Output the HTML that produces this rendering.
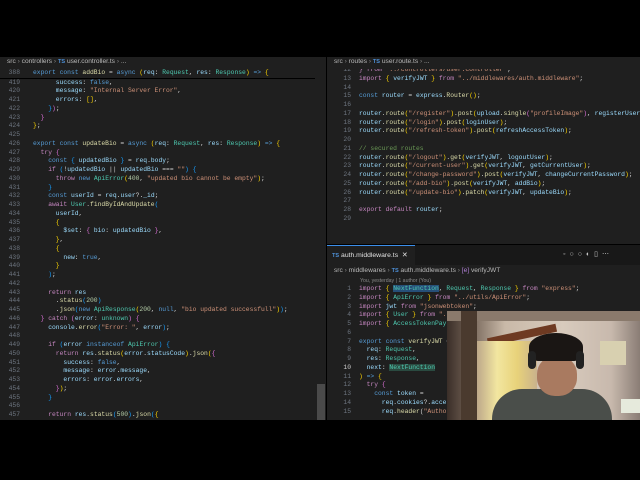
<!DOCTYPE html>
<html><head><meta charset="utf-8"><style>
*{margin:0;padding:0;box-sizing:border-box}
body{width:640px;height:480px;background:#000;position:relative;overflow:hidden;font-family:"Liberation Mono",monospace}
.pane{position:absolute;background:#1f1f1f;overflow:hidden}
.bc{position:absolute;font-family:"Liberation Sans",sans-serif;font-size:6.6px;color:#b8b8b8;white-space:nowrap}
.ts{color:#4d8fd6;font-size:5.6px;font-weight:bold}
.code{position:absolute;font-size:6.33px;line-height:8.75px;white-space:pre;color:#d4d4d4}
.ln{position:absolute;font-size:6.33px;line-height:8.75px;white-space:pre;color:#6e7681;text-align:right}
.k{color:#569cd6}.c{color:#c586c0}.v{color:#9cdcfe}.f{color:#dcdcaa}.s{color:#ce9178}.t{color:#4ec9b0}.n{color:#b5cea8}.g{color:#6a9955}.y{color:#ffd700}.p{color:#da70d6}.b{color:#179fff}
</style></head><body>

<div class="pane" style="left:0;top:57px;width:326px;height:363px">
 <div class="bc" style="left:7px;top:1px">src <span style="color:#888">›</span> controllers <span style="color:#888">›</span> <span class="ts">TS</span> user.controller.ts <span style="color:#888">›</span> ...</div>
 <div style="position:absolute;left:0;top:12px;width:315px;height:10px;background:#1f1f1f;border-bottom:1px solid #000;z-index:2"></div>
 <div class="ln" style="left:0;top:12px;width:20px;z-index:3">388</div>
 <div class="code" style="left:33px;top:12px;z-index:3"><span class="k">export const</span> <span class="f">addBio</span> = <span class="k">async</span> <span class="y">(</span><span class="v">req</span>: <span class="t">Request</span>, <span class="v">res</span>: <span class="t">Response</span><span class="y">)</span> <span class="k">=&gt;</span> <span class="y">{</span></div>
 <div class="ln" style="left:0;top:21.5px;width:20px">419
420
421
422
423
424
425
426
427
428
429
430
431
432
433
434
435
436
437
438
439
440
441
442
443
444
445
446
447
448
449
450
451
452
453
454
455
456
457</div>
 <div class="code" style="left:33px;top:21.5px">      <span class="v">success</span>: <span class="k">false</span>,
      <span class="v">message</span>: <span class="s">"Internal Server Error"</span>,
      <span class="v">errors</span>: <span class="y">[]</span>,
    <span class="b">}</span><span class="p">)</span>;
  <span class="p">}</span>
<span class="y">}</span>;

<span class="k">export const</span> <span class="f">updateBio</span> = <span class="k">async</span> <span class="y">(</span><span class="v">req</span>: <span class="t">Request</span>, <span class="v">res</span>: <span class="t">Response</span><span class="y">)</span> <span class="k">=&gt;</span> <span class="y">{</span>
  <span class="c">try</span> <span class="p">{</span>
    <span class="k">const</span> <span class="b">{</span> <span class="v">updatedBio</span> <span class="b">}</span> = <span class="v">req</span>.<span class="v">body</span>;
    <span class="c">if</span> <span class="b">(</span>!<span class="v">updatedBio</span> || <span class="v">updatedBio</span> === <span class="s">""</span><span class="b">)</span> <span class="b">{</span>
      <span class="c">throw</span> <span class="k">new</span> <span class="t">ApiError</span><span class="y">(</span><span class="n">400</span>, <span class="s">"updated bio cannot be empty"</span><span class="y">)</span>;
    <span class="b">}</span>
    <span class="k">const</span> <span class="v">userId</span> = <span class="v">req</span>.<span class="v">user</span>?.<span class="v">_id</span>;
    <span class="c">await</span> <span class="t">User</span>.<span class="f">findByIdAndUpdate</span><span class="b">(</span>
      <span class="v">userId</span>,
      <span class="y">{</span>
        <span class="v">$set</span>: <span class="p">{</span> <span class="v">bio</span>: <span class="v">updatedBio</span> <span class="p">}</span>,
      <span class="y">}</span>,
      <span class="y">{</span>
        <span class="v">new</span>: <span class="k">true</span>,
      <span class="y">}</span>
    <span class="b">)</span>;

    <span class="c">return</span> <span class="v">res</span>
      .<span class="f">status</span><span class="b">(</span><span class="n">200</span><span class="b">)</span>
      .<span class="f">json</span><span class="b">(</span><span class="k">new</span> <span class="t">ApiResponse</span><span class="y">(</span><span class="n">200</span>, <span class="k">null</span>, <span class="s">"bio updated successfull"</span><span class="y">)</span><span class="b">)</span>;
  <span class="p">}</span> <span class="c">catch</span> <span class="p">(</span><span class="v">error</span>: <span class="t">unknown</span><span class="p">)</span> <span class="p">{</span>
    <span class="v">console</span>.<span class="f">error</span><span class="b">(</span><span class="s">"Error: "</span>, <span class="v">error</span><span class="b">)</span>;

    <span class="c">if</span> <span class="b">(</span><span class="v">error</span> <span class="k">instanceof</span> <span class="t">ApiError</span><span class="b">)</span> <span class="b">{</span>
      <span class="c">return</span> <span class="v">res</span>.<span class="f">status</span><span class="y">(</span><span class="v">error</span>.<span class="v">statusCode</span><span class="y">)</span>.<span class="f">json</span><span class="y">(</span><span class="p">{</span>
        <span class="v">success</span>: <span class="k">false</span>,
        <span class="v">message</span>: <span class="v">error</span>.<span class="v">message</span>,
        <span class="v">errors</span>: <span class="v">error</span>.<span class="v">errors</span>,
      <span class="p">}</span><span class="y">)</span>;
    <span class="b">}</span>

    <span class="c">return</span> <span class="v">res</span>.<span class="f">status</span><span class="b">(</span><span class="n">500</span><span class="b">)</span>.<span class="f">json</span><span class="b">(</span><span class="y">{</span></div>
 <div style="position:absolute;left:317px;top:327px;width:8px;height:36px;background:#4a4a4a"></div>
</div>

<div class="pane" style="left:327px;top:57px;width:313px;height:187px">
 <div class="ln" style="left:0;top:9px;width:24px">12
13
14
15
16
17
18
19
20
21
22
23
24
25
26
27
28
29</div>
 <div class="code" style="left:32px;top:9px"><span class="c">} from</span> <span class="s">"../controllers/user.controller"</span>;
<span class="c">import</span> <span class="y">{</span> <span class="v">verifyJWT</span> <span class="y">}</span> <span class="c">from</span> <span class="s">"../middlewares/auth.middleware"</span>;

<span class="k">const</span> <span class="v">router</span> = <span class="v">express</span>.<span class="f">Router</span><span class="y">()</span>;

<span class="v">router</span>.<span class="f">route</span><span class="y">(</span><span class="s">"/register"</span><span class="y">)</span>.<span class="f">post</span><span class="y">(</span><span class="v">upload</span>.<span class="f">single</span><span class="p">(</span><span class="s">"profileImage"</span><span class="p">)</span>, <span class="v">registerUser</span>
<span class="v">router</span>.<span class="f">route</span><span class="y">(</span><span class="s">"/login"</span><span class="y">)</span>.<span class="f">post</span><span class="y">(</span><span class="v">loginUser</span><span class="y">)</span>;
<span class="v">router</span>.<span class="f">route</span><span class="y">(</span><span class="s">"/refresh-token"</span><span class="y">)</span>.<span class="f">post</span><span class="y">(</span><span class="v">refreshAccessToken</span><span class="y">)</span>;

<span class="g">// secured routes</span>
<span class="v">router</span>.<span class="f">route</span><span class="y">(</span><span class="s">"/logout"</span><span class="y">)</span>.<span class="f">get</span><span class="y">(</span><span class="v">verifyJWT</span>, <span class="v">logoutUser</span><span class="y">)</span>;
<span class="v">router</span>.<span class="f">route</span><span class="y">(</span><span class="s">"/current-user"</span><span class="y">)</span>.<span class="f">get</span><span class="y">(</span><span class="v">verifyJWT</span>, <span class="v">getCurrentUser</span><span class="y">)</span>;
<span class="v">router</span>.<span class="f">route</span><span class="y">(</span><span class="s">"/change-password"</span><span class="y">)</span>.<span class="f">post</span><span class="y">(</span><span class="v">verifyJWT</span>, <span class="v">changeCurrentPassword</span><span class="y">)</span>;
<span class="v">router</span>.<span class="f">route</span><span class="y">(</span><span class="s">"/add-bio"</span><span class="y">)</span>.<span class="f">post</span><span class="y">(</span><span class="v">verifyJWT</span>, <span class="v">addBio</span><span class="y">)</span>;
<span class="v">router</span>.<span class="f">route</span><span class="y">(</span><span class="s">"/update-bio"</span><span class="y">)</span>.<span class="f">patch</span><span class="y">(</span><span class="v">verifyJWT</span>, <span class="v">updateBio</span><span class="y">)</span>;

<span class="c">export</span> <span class="c">default</span> <span class="v">router</span>;
</div>
 <div style="position:absolute;left:0;top:0;width:313px;height:12px;background:#1f1f1f"></div>
 <div class="bc" style="left:7px;top:1px">src <span style="color:#888">›</span> routes <span style="color:#888">›</span> <span class="ts">TS</span> user.route.ts <span style="color:#888">›</span> ...</div>
</div>

<div class="pane" style="left:327px;top:245px;width:313px;height:175px;background:#1f1f1f">
 <div style="position:absolute;left:0;top:0;width:313px;height:20px;background:#181818"></div>
 <div style="position:absolute;left:0;top:0;width:88px;height:20px;background:#1f1f1f;border-top:1px solid #3b8eea"></div>
 <div class="bc" style="left:5px;top:6px;color:#e0e0e0;font-size:6.8px"><span class="ts">TS</span> auth.middleware.ts &nbsp;✕</div>
 <div class="bc" style="left:236px;top:5px;color:#c5c5c5;font-size:7px;letter-spacing:4px">◦○○◐▯⋯</div>
 <div class="bc" style="left:7px;top:22px">src <span style="color:#888">›</span> middlewares <span style="color:#888">›</span> <span class="ts">TS</span> auth.middleware.ts <span style="color:#888">›</span> <span style="color:#b180d7">[e]</span> verifyJWT</div>
 <div class="bc" style="left:33px;top:33px;font-size:5.2px;color:#8a8a8a">You, yesterday | 1 author (You)</div>
 <div class="ln" style="left:0;top:40px;width:24px">1
2
3
4
5
6
7
8
9
<span style="color:#ccc">10</span>
11
12
13
14
15</div>
 <div class="code" style="left:32px;top:40px"><span class="c">import</span> <span class="y">{</span> <span class="t" style="background:#264f78">NextFunction</span>, <span class="t">Request</span>, <span class="t">Response</span> <span class="y">}</span> <span class="c">from</span> <span class="s">"express"</span>;
<span class="c">import</span> <span class="y">{</span> <span class="t">ApiError</span> <span class="y">}</span> <span class="c">from</span> <span class="s">"../utils/ApiError"</span>;
<span class="c">import</span> <span class="v">jwt</span> <span class="c">from</span> <span class="s">"jsonwebtoken"</span>;
<span class="c">import</span> <span class="y">{</span> <span class="t">User</span> <span class="y">}</span> <span class="c">from</span> <span class="s">"..</span>
<span class="c">import</span> <span class="y">{</span> <span class="t">AccessTokenPay</span>

<span class="k">export const</span> <span class="f">verifyJWT</span> =
  <span class="v">req</span>: <span class="t">Request</span>,
  <span class="v">res</span>: <span class="t">Response</span>,
  <span class="v">next</span>: <span class="t" style="background:#2a4a40">NextFunction</span>
<span class="y">)</span> <span class="k">=&gt;</span> <span class="y">{</span>
  <span class="c">try</span> <span class="p">{</span>
    <span class="k">const</span> <span class="v">token</span> =
      <span class="v">req</span>.<span class="v">cookies</span>?.<span class="v">acce</span>
      <span class="v">req</span>.<span class="f">header</span>(<span class="s">"Author</span></div>
</div>

<div style="position:absolute;left:447px;top:311px;width:193px;height:109px;overflow:hidden;background:linear-gradient(90deg,#3a2e28 0%,#6a5a4e 10%,#c9b9a8 30%,#d8cbbd 60%,#c8b9ad 85%,#8a7d75 100%)">
 <div style="position:absolute;left:0;top:0;width:193px;height:10px;background:#8a7a6c"></div>
 <div style="position:absolute;left:14px;top:0;width:16px;height:109px;background:#4a3a2e"></div>
 <div style="position:absolute;left:40px;top:20px;width:70px;height:8px;background:#6e3a22;transform:rotate(-12deg)"></div>
 <div style="position:absolute;left:30px;top:30px;width:60px;height:79px;background:linear-gradient(90deg,#bda88a,#f2e6a0,#e8d27a,#c9b28c)"></div>
 <div style="position:absolute;left:153px;top:30px;width:26px;height:24px;background:#d8d0b0"></div>
 <div style="position:absolute;left:174px;top:88px;width:19px;height:14px;background:#e6eadc"></div>
 <div style="position:absolute;left:45px;top:78px;width:120px;height:40px;background:#4a4e4a;border-radius:30px 30px 0 0"></div>
 <div style="position:absolute;left:90px;top:45px;width:40px;height:40px;background:#a97a60;border-radius:45%"></div>
 <div style="position:absolute;left:82px;top:22px;width:54px;height:28px;background:#1a1614;border-radius:50% 50% 20% 20%"></div>
 <div style="position:absolute;left:81px;top:40px;width:8px;height:18px;background:#222;border-radius:4px"></div>
 <div style="position:absolute;left:129px;top:40px;width:8px;height:18px;background:#222;border-radius:4px"></div>
</div>
</body></html>
